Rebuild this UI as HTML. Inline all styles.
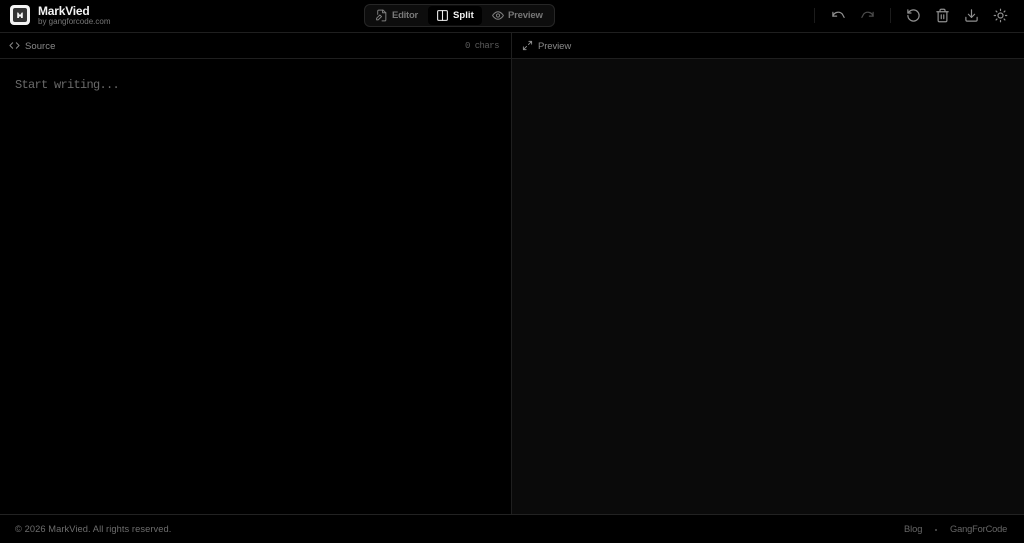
<!DOCTYPE html>
<html><head><meta charset="utf-8"><style>
*{box-sizing:border-box;margin:0;padding:0}
html,body{width:1024px;height:543px;background:#000;overflow:hidden;font-family:"Liberation Sans",sans-serif}
.a{position:absolute;white-space:nowrap;line-height:1}
svg{position:absolute;fill:none;stroke-linecap:round;stroke-linejoin:round}
.ln{position:absolute;background:#1f1f1f}
</style></head><body>
<div class="ln" style="left:0;top:32px;width:1024px;height:1px"></div>
<div class="ln" style="left:0;top:58px;width:1024px;height:1px"></div>
<div class="ln" style="left:511px;top:33px;width:1px;height:481px"></div>
<div style="position:absolute;left:512px;top:59px;width:512px;height:455px;background:#0a0a0a"></div>
<div class="ln" style="left:0;top:514px;width:1024px;height:1px;background:#222"></div>

<div style="position:absolute;left:10px;top:5px;width:20px;height:20px;background:#f4f4f4;border-radius:4px"></div>
<div style="position:absolute;left:13px;top:8px;width:14px;height:14px;background:#333;border-radius:2px"></div>
<svg style="left:13px;top:8px" width="14" height="14" viewBox="0 0 14 14"><path d="M4.2 10V4.5h1L7 7l1.8-2.5h1V10z" fill="#f4f4f4" stroke="none"/><path d="M6 10V8l1 1.2L8 8v2z" fill="#333" stroke="none"/></svg>
<div class="a" style="left:38px;top:5px;font-size:12px;font-weight:700;color:#f2f2f2;letter-spacing:-.2px">MarkVied</div>
<div class="a" style="left:38px;top:17.5px;font-size:8px;color:#777;letter-spacing:0">by gangforcode.com</div>

<div style="position:absolute;left:364px;top:4px;width:191px;height:23px;background:#0d0d0d;border:1px solid #262626;border-radius:6px"></div>
<div style="position:absolute;left:428px;top:6px;width:54px;height:19px;background:#000;border-radius:4px"></div>
<svg style="left:375px;top:9px" width="13" height="13" viewBox="0 0 24 24" stroke="#808080" stroke-width="1.8"><path d="M5 10V4a2 2 0 0 1 2-2h8l5 5v13a2 2 0 0 1-2 2h-5"/><path d="M14 2v5h6"/><path d="M9 11l3 3-6 6H3v-3z"/></svg>
<div class="a" style="left:392px;top:11px;font-size:9.5px;font-weight:700;color:#777;letter-spacing:-.25px">Editor</div>
<svg style="left:436px;top:9px" width="13" height="13" viewBox="0 0 24 24" stroke="#f0f0f0" stroke-width="2"><rect x="3" y="3" width="18" height="18" rx="2"/><path d="M12 3v18"/></svg>
<div class="a" style="left:453px;top:11px;font-size:9.5px;font-weight:700;color:#f5f5f5;letter-spacing:.05px">Split</div>
<svg style="left:491px;top:9px" width="14" height="13" viewBox="0 0 24 24" stroke="#808080" stroke-width="1.8"><path d="M2 12s4-7 10-7 10 7 10 7-4 7-10 7-10-7-10-7z"/><circle cx="12" cy="12" r="3"/></svg>
<div class="a" style="left:508px;top:11px;font-size:9.5px;font-weight:700;color:#777;letter-spacing:-.18px">Preview</div>

<div class="ln" style="left:814px;top:8px;width:1px;height:15px;background:#1c1c1c"></div>
<div class="ln" style="left:890px;top:8px;width:1px;height:15px;background:#1c1c1c"></div>
<svg style="left:831px;top:8px" width="15" height="15" viewBox="0 0 24 24" stroke="#909090" stroke-width="1.9"><path d="M3 7v6h6"/><path d="M3 13a9 9 0 0 1 15-3.5l3 5.5"/></svg>
<svg style="left:860px;top:8px" width="15" height="15" viewBox="0 0 24 24" stroke="#4c4c4c" stroke-width="1.9"><path d="M21 7v6h-6"/><path d="M21 13a9 9 0 0 0-15-3.5L3 15"/></svg>
<svg style="left:906px;top:8px" width="15" height="15" viewBox="0 0 24 24" stroke="#909090" stroke-width="1.9"><path d="M3 12a9 9 0 1 0 9-9 9.7 9.7 0 0 0-6.7 2.7L3 8"/><path d="M3 3v5h5"/></svg>
<svg style="left:935px;top:8px" width="15" height="15" viewBox="0 0 24 24" stroke="#909090" stroke-width="1.9"><path d="M3 6h18"/><path d="M19 6v14a2 2 0 0 1-2 2H7a2 2 0 0 1-2-2V6"/><path d="M8 6V4a2 2 0 0 1 2-2h4a2 2 0 0 1 2 2v2"/><path d="M10 11v6M14 11v6"/></svg>
<svg style="left:964px;top:8px" width="15" height="15" viewBox="0 0 24 24" stroke="#909090" stroke-width="1.9"><path d="M21 15v4a2 2 0 0 1-2 2H5a2 2 0 0 1-2-2v-4"/><path d="M7 10l5 5 5-5"/><path d="M12 15V3"/></svg>
<svg style="left:993px;top:8px" width="15" height="15" viewBox="0 0 24 24" stroke="#909090" stroke-width="1.9"><circle cx="12" cy="12" r="4"/><path d="M12 2v2M12 20v2M4.9 4.9l1.4 1.4M17.7 17.7l1.4 1.4M2 12h2M20 12h2M6.3 17.7l-1.4 1.4M19.1 4.9l-1.4 1.4"/></svg>

<svg style="left:9px;top:40px" width="11" height="11" viewBox="0 0 24 24" stroke="#8c8c8c" stroke-width="2"><path d="M8 6l-6 6 6 6M16 6l6 6-6 6"/></svg>
<div class="a" style="left:25px;top:41.5px;font-size:9.5px;color:#8a8a8a;letter-spacing:.05px">Source</div>
<div class="a" style="left:465px;top:41.5px;font-family:'Liberation Mono',monospace;font-size:9px;color:#5c5c5c;letter-spacing:-.55px">0 chars</div>
<svg style="left:522px;top:40px" width="11" height="11" viewBox="0 0 24 24" stroke="#8c8c8c" stroke-width="2"><path d="M15 3h6v6M21 3l-7 7M9 21H3v-6M3 21l7-7"/></svg>
<div class="a" style="left:538px;top:41.5px;font-size:9.5px;color:#8a8a8a;letter-spacing:-.1px">Preview</div>

<div class="a" style="left:15px;top:79px;font-family:'Liberation Mono',monospace;font-size:12px;color:#6a6a6a;letter-spacing:-.7px">Start writing...</div>

<div class="a" style="left:15px;top:525px;font-size:9.3px;color:#6e6e6e;letter-spacing:.08px">© 2026 MarkVied. All rights reserved.</div>
<div class="a" style="left:904px;top:525px;font-size:9.3px;color:#666;letter-spacing:-.05px">Blog</div>
<div style="position:absolute;left:935px;top:529px;width:2px;height:2px;border-radius:50%;background:#555"></div>
<div class="a" style="left:950px;top:525px;font-size:9.3px;color:#666;letter-spacing:-.16px">GangForCode</div>
</body></html>
